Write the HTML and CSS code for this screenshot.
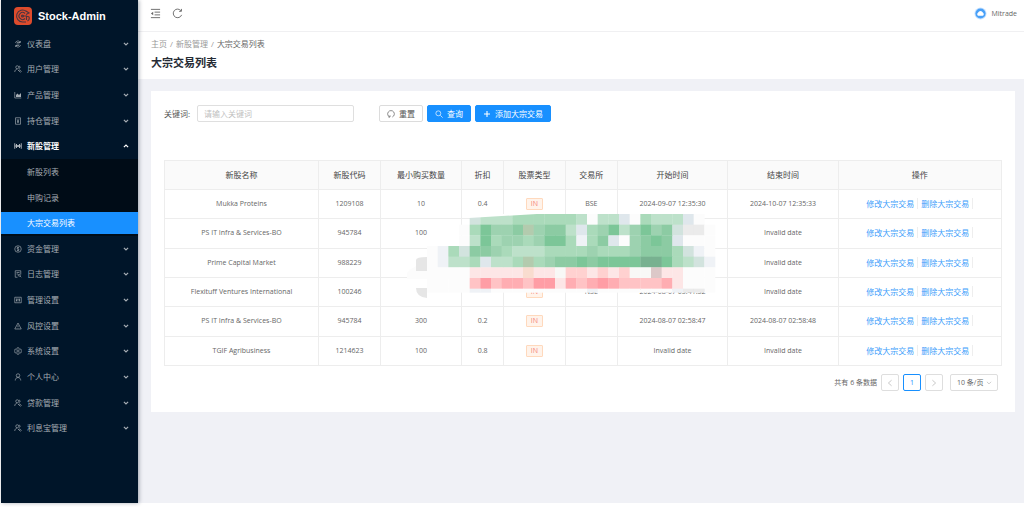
FILE: index.html
```html
<!DOCTYPE html>
<html lang="zh-CN">
<head>
<meta charset="utf-8">
<meta name="viewport" content="width=device-width, initial-scale=1">
<title>大宗交易列表 - Stock-Admin</title>
<link rel="stylesheet" href="styles.css">
</head>
<body>
<svg class="defs" aria-hidden="true">
  <symbol id="down" viewBox="0 0 10 10"><path d="M1.5 3 5 6.5 8.5 3"/></symbol>
  <symbol id="users" viewBox="0 0 16 16"><circle cx="6.5" cy="4.5" r="3"/><path d="M1.5 14c0-3.500 2-5.500 5-5.500M10 2c3 .5 3 4.500 0 5M9 10.500c3-1.500 5.500 1 5.500 3.500M8 10l5 5"/></symbol>
</svg>
<div class="layout">
  <aside class="sidebar">
    <a class="brand" href="#">
      <svg class="brand-logo" viewBox="0 0 18 18" aria-hidden="true"><rect width="18" height="18" rx="4" fill="#dd4b2c"/><g fill="none" stroke="#4a3540" stroke-width="1.100"><path d="M12.500 4.500A6 6 0 1 0 9 15h3M11 6.500a3.500 3.500 0 1 0 0 5M8 9h4.500v4M12 4l3 2-3 1.500M13 9.500c3-.5 3 3 .5 4.500"/><circle cx="8.500" cy="9" r="1"/></g></svg>
      <span>Stock-Admin</span>
    </a>
    <nav>
      <ul class="menu">
        <li><a href="#"><svg class="icon" viewBox="0 0 16 16"><path d="M3 6a5 5 0 0 1 9-2M13 2v3h-3M13 10a5 5 0 0 1-9 2M3 14v-3h3M5 8h6M6 5h6M4 11h6"/></svg>仪表盘<svg class="arrow"><use href="#down"/></svg></a></li>
        <li><a href="#"><svg class="icon"><use href="#users"/></svg>用户管理<svg class="arrow"><use href="#down"/></svg></a></li>
        <li><a href="#"><svg class="icon" viewBox="0 0 16 16"><path d="M1.500 2v12h13"/><path class="solid" d="M4 12V8l3-3 3 3 4-4v8z"/></svg>产品管理<svg class="arrow"><use href="#down"/></svg></a></li>
        <li><a href="#"><svg class="icon" viewBox="0 0 16 16"><path d="M3 1.500h10v13H3zM6 4.500 8 7l2-2.500M8 7v5M6 8h4M6 10h4"/></svg>持仓管理<svg class="arrow"><use href="#down"/></svg></a></li>
        <li class="open"><a href="#"><svg class="icon" viewBox="0 0 16 16"><path d="M1.500 2.500v11M14.500 2.500v11M5 4v8M11 4v8M5 6l6 4M11 6l-6 4M2 8h2M12 8h2"/></svg>新股管理<svg class="arrow up"><use href="#down"/></svg></a></li>
        <li class="submenu">
          <ul>
            <li><a href="#">新股列表</a></li>
            <li><a href="#">申购记录</a></li>
            <li><a class="active" href="#" aria-current="page">大宗交易列表</a></li>
          </ul>
        </li>
        <li><a href="#"><svg class="icon" viewBox="0 0 16 16"><circle cx="8" cy="8" r="6.500"/><path d="M10 6c-.5-2-4-1.500-4 .3C6 8.500 10 7.500 10 9.700c0 2-3.500 2.300-4 .3M8 3.500v9"/></svg>资金管理<svg class="arrow"><use href="#down"/></svg></a></li>
        <li><a href="#"><svg class="icon" viewBox="0 0 16 16"><path d="M7 14.500H2.500v-13h11V9M5 5h6M5 8h3"/><circle cx="10.500" cy="10.500" r="2"/><path d="m12 12 2.500 2.500"/></svg>日志管理<svg class="arrow"><use href="#down"/></svg></a></li>
        <li><a href="#"><svg class="icon" viewBox="0 0 16 16"><path d="M1.500 2.500h13v11h-13zM5 5v6M8 5v6M11 5v6M4 9h2M7 6.500h2M10 8h2"/></svg>管理设置<svg class="arrow"><use href="#down"/></svg></a></li>
        <li><a href="#"><svg class="icon" viewBox="0 0 16 16"><path d="M8 2 1.500 14h13zM8 6.500v3.500M8 11.500v1"/></svg>风控设置<svg class="arrow"><use href="#down"/></svg></a></li>
        <li><a href="#"><svg class="icon" viewBox="0 0 16 16"><path d="m6.500 1.500-.5 2-1.500 1-2-.5L1 6.500 2.500 8 1 9.500 2.500 12l2-.5 1.500 1 .5 2h3l.5-2 1.500-1 2 .5L15 9.500 13.500 8 15 6.500 13.500 4l-2 .5-1.500-1-.5-2z"/><circle cx="8" cy="8" r="2.200"/></svg>系统设置<svg class="arrow"><use href="#down"/></svg></a></li>
        <li><a href="#"><svg class="icon" viewBox="0 0 16 16"><circle cx="8" cy="5" r="3.500"/><path d="M2.500 15c0-4 2.500-6 5.500-6s5.500 2 5.500 6"/></svg>个人中心<svg class="arrow"><use href="#down"/></svg></a></li>
        <li><a href="#"><svg class="icon"><use href="#users"/></svg>贷款管理<svg class="arrow"><use href="#down"/></svg></a></li>
        <li><a href="#"><svg class="icon"><use href="#users"/></svg>利息宝管理<svg class="arrow"><use href="#down"/></svg></a></li>
      </ul>
    </nav>
  </aside>

  <div class="main">
    <header class="topbar">
      <button class="tool" type="button" aria-label="收起菜单"><svg viewBox="0 0 12 12"><path d="M1 1.500h10M5 4.500h6M5 7.500h6M1 10.500h10"/><path class="solid" d="M3.500 4v4L1 6z"/></svg></button>
      <button class="tool" type="button" aria-label="刷新"><svg viewBox="0 0 12 12"><path d="M9.800 3A4.700 4.700 0 1 0 10.500 7.500M10.300 1v2.600H7.700"/></svg></button>
      <a class="account" href="#">
        <svg viewBox="0 0 14 14" aria-hidden="true"><circle cx="7" cy="7" r="6.500" fill="#c9e3ff"/><circle cx="7" cy="7" r="5.500" fill="#48a0f8"/><path d="M4.500 9.500a2 2 0 0 1 0-3.500 2.700 2.700 0 0 1 5 0 2 2 0 0 1 0 3.500z" fill="#fff"/></svg>
        <span>Mitrade</span>
      </a>
    </header>
    <div class="page-head">
      <nav class="crumbs" aria-label="面包屑"><a href="#">主页</a><span>/</span><a href="#">新股管理</a><span>/</span><b>大宗交易列表</b></nav>
      <h1>大宗交易列表</h1>
    </div>

    <main class="card">
      <form class="filters">
        <label for="keyword">关键词:</label>
        <input id="keyword" type="text" placeholder="请输入关键词">
        <button class="btn" type="reset"><svg viewBox="0 0 12 12"><path d="M4 10.500A5 5 0 1 1 8 10.500M2 10.500h2.500V8"/></svg>重置</button>
        <button class="btn primary" type="button"><svg viewBox="0 0 12 12"><circle cx="5" cy="5" r="3.700"/><path d="m8 8 3.500 3.500"/></svg>查询</button>
        <button class="btn primary" type="button"><svg viewBox="0 0 12 12"><path d="M6 1.500v9M1.500 6h9" stroke-width="1.600"/></svg>添加大宗交易</button>
      </form>

      <div class="table-wrap">
        <table>
          <colgroup><col class="c-name"><col class="c-code"><col class="c-min"><col class="c-disc"><col class="c-code"><col class="c-exch"><col class="c-time"><col class="c-time"><col></colgroup>
          <thead><tr><th>新股名称</th><th>新股代码</th><th>最小购买数量</th><th>折扣</th><th>股票类型</th><th>交易所</th><th>开始时间</th><th>结束时间</th><th>操作</th></tr></thead>
          <tbody>
            <tr><td>Mukka Proteins</td><td>1209108</td><td>10</td><td>0.4</td><td><span class="tag">IN</span></td><td>BSE</td><td>2024-09-07 12:35:30</td><td>2024-10-07 12:35:33</td><td class="ops"><a href="#">修改大宗交易</a><a href="#">删除大宗交易</a></td></tr>
            <tr><td>PS IT Infra &amp; Services-BO</td><td>945784</td><td>100</td><td></td><td></td><td></td><td></td><td>Invalid date</td><td class="ops"><a href="#">修改大宗交易</a><a href="#">删除大宗交易</a></td></tr>
            <tr><td>Prime Capital Market</td><td>988229</td><td></td><td></td><td></td><td></td><td></td><td>Invalid date</td><td class="ops"><a href="#">修改大宗交易</a><a href="#">删除大宗交易</a></td></tr>
            <tr><td>Flexituff Ventures International</td><td>100246</td><td></td><td></td><td><span class="tag">IN</span></td><td>NSE</td><td>2024-08-07 03:41:32</td><td>Invalid date</td><td class="ops"><a href="#">修改大宗交易</a><a href="#">删除大宗交易</a></td></tr>
            <tr><td>PS IT Infra &amp; Services-BO</td><td>945784</td><td>300</td><td>0.2</td><td><span class="tag">IN</span></td><td></td><td>2024-08-07 02:58:47</td><td>2024-08-07 02:58:48</td><td class="ops"><a href="#">修改大宗交易</a><a href="#">删除大宗交易</a></td></tr>
            <tr><td>TGIF Agribusiness</td><td>1214623</td><td>100</td><td>0.8</td><td><span class="tag">IN</span></td><td></td><td>Invalid date</td><td>Invalid date</td><td class="ops"><a href="#">修改大宗交易</a><a href="#">删除大宗交易</a></td></tr>
          </tbody>
        </table>
        <svg class="mosaic" id="mosaic" viewBox="0 0 320 96" aria-hidden="true"></svg>
      </div>

      <div class="pager">
        <span>共有 6 条数据</span>
        <button type="button" disabled aria-label="上一页"><svg viewBox="0 0 10 10"><path d="M7 1.500 3 5l4 3.500"/></svg></button>
        <button class="current" type="button" aria-current="page">1</button>
        <button type="button" disabled aria-label="下一页"><svg viewBox="0 0 10 10"><path d="m3 1.500 4 3.500-4 3.500"/></svg></button>
        <span class="size"><select aria-label="每页条数"><option>10 条/页</option><option>20 条/页</option></select><svg><use href="#down"/></svg></span>
      </div>
    </main>
  </div>
</div>
<script src="mosaic.js"></script>
</body>
</html>
```
FILE: mosaic.js
```js
// Pixelated patch over the hidden cells: one letter per tile, a dot is empty.
const colors = {
  A: '#7cc698', B: '#8ccba3', C: '#9dd2b0', D: '#aadaba', E: '#bde1ca',
  F: '#d2e3de', G: '#dfe7ec', H: '#eff2f6', W: '#fcfcfc', K: '#ebebeb',
  M: '#78b190', T: '#b3cbae', P: '#fde6e6', Q: '#ffd1d0', R: '#ffc3c5',
  S: '#ffadb2', X: '#ff9da5', Y: '#f9dccf', Z: '#dcc8c8', N: '#f8f8f6'
};
const rows = [
  '...FEEEDDDDDDEWEEGWDEEEGW..',
  '..WDACCBTCBBEGDCAECACBFKKW.',
  '..WEADCCDCAADHDBGWCBABGWWW.',
  'WHDFBBCDEEEDDDDCDDDCBBBDFHW',
  'WHEEDGEEDTDCBBABAAAAMMADEFH',
  'WWWWPPPPPYPPNQQPQPQNNZPPWWW',
  'WWWWRXRSSRXXPSRSXSRRRRSPWWW',
  'WWWWHHWWWWWWWWWHWWWWWWWHKKW'
];
const svg = document.getElementById('mosaic');
const tile = (tag, attrs) => {
  const el = document.createElementNS('http://www.w3.org/2000/svg', tag);
  for (const key in attrs) el.setAttribute(key, attrs[key]);
  svg.appendChild(el);
};
const step = 32 / 3;
tile('path', { d: 'M0 59Q8 49 25 49H60V65H0Z M24 32H50V60H24Z', fill: '#fcfcfc' });
tile('path', { d: 'M9 57V46Q9 43 20 43V57Z M9 74H20V84Q9 83 9 74Z', fill: '#e6e6e6' });
rows.forEach((row, y) => {
  const shift = y < 3 ? 1 : 0;
  [...row].forEach((letter, x) => {
    if (letter === '.') return;
    tile('rect', {
      x: 20 + (x + shift) * step, y: y * step,
      width: step + 0.3, height: y === 7 ? 4 : step + 0.3,
      fill: colors[letter]
    });
  });
});
// slanted upper edge
tile('path', { d: 'M62 0H130L62 4Z', fill: '#fff' });
```
FILE: styles.css
```css
* { box-sizing: border-box; }
body {
  margin: 0;
  padding: 0 0 4px 1px;
  background: #fff;
  color: #666;
  font: 8px/12px "Open Sans", "Noto Sans CJK SC", sans-serif;
}
a { color: inherit; text-decoration: none; }
ul { margin: 0; padding: 0; list-style: none; }
button, input, select { font: inherit; color: inherit; }
svg { fill: none; stroke: currentColor; flex: none; }
.solid { fill: currentColor; stroke: none; }
.defs { position: absolute; width: 0; height: 0; }

.layout { display: flex; min-height: calc(100vh - 4px); background: #f0f1f6; }
.sidebar {
  position: relative;
  z-index: 1;
  flex: none;
  width: 137px;
  background: #001529;
  color: #a6adb4;
  box-shadow: 1px 0 4px rgba(0, 21, 41, .35);
}
.brand {
  display: flex;
  align-items: center;
  gap: 6px;
  height: 31px;
  padding-left: 13px;
  color: #fff;
  font: bold 11px/16px "Liberation Sans", Arial, sans-serif;
}
.brand-logo { width: 18px; height: 18px; stroke: none; }
.menu { display: grid; grid-auto-rows: 1fr; height: 410px; }
.menu a { display: flex; align-items: center; height: 100%; padding: 0 9px 0 13px; }
.icon { width: 8px; height: 8px; margin-right: 5px; stroke-width: 1.3; }
.arrow { width: 6px; height: 6px; margin-left: auto; stroke-width: 2; }
.up { transform: rotate(180deg); }
.open { color: #fff; font-weight: bold; }
.submenu { grid-row: span 3; background: #000c17; }
.submenu ul { display: grid; grid-auto-rows: 1fr; height: 100%; }
.submenu li { padding: 2px 0; }
.submenu a { padding-left: 26px; }
.submenu .active { background: #1890ff; color: #fff; }

.main { flex: 1; min-width: 0; }
.topbar {
  display: flex;
  align-items: center;
  gap: 11px;
  height: 32px;
  padding: 0 7px 4px 12px;
  background: #fff;
  border-bottom: 1px solid #f0f0f2;
}
.tool { width: 11px; height: 11px; padding: 0; border: 0; background: none; color: #666; }
.tool svg { display: block; width: 11px; height: 11px; }
.account { display: flex; align-items: center; gap: 4px; margin-left: auto; font-size: 7px; }
.account svg { width: 13px; height: 13px; stroke: none; }
.page-head { padding: 6px 13px 8px; background: #fff; }
.crumbs { display: flex; gap: 3px; color: #999; }
.crumbs b { color: #666; font-weight: normal; }
h1 { margin: 5px 0 0; color: #262b35; font-size: 11px; line-height: 16px; }

.card { margin: 12px 9px 0 13px; padding: 14px 13px 21px; background: #fff; }
.filters { display: flex; align-items: center; gap: 4px; margin-bottom: 38px; color: #555; }
.filters label { width: 29px; }
.filters input {
  width: 157px;
  height: 17px;
  margin-right: 21px;
  padding: 0 6px;
  border: 1px solid #dfdfdf;
  border-radius: 2px;
}
.filters input::placeholder { color: #bfbfbf; }
.btn {
  display: flex;
  align-items: center;
  gap: 4px;
  height: 17px;
  padding: 0 7px;
  border: 1px solid #dcdcdc;
  border-radius: 2px;
  background: #fff;
  white-space: nowrap;
}
.btn svg { width: 8px; height: 8px; }
.primary { border-color: #1890ff; background: #1890ff; color: #fff; }

.table-wrap { position: relative; }
table { width: 100%; height: 206px; table-layout: fixed; border-collapse: collapse; font-size: 7px; }
th, td { padding: 0; border: 1px solid #ededed; text-align: center; white-space: nowrap; }
th { height: 29px; background: #fafafa; color: #444; font-size: 8px; font-weight: normal; }
.c-name { width: 18.4%; }
.c-code { width: 7.4%; }
.c-min { width: 9.7%; }
.c-disc { width: 5%; }
.c-exch { width: 6.2%; }
.c-time { width: 13.2%; }
.tag {
  display: inline-block;
  padding: 0 4px;
  border: 1px solid #ffd9bd;
  border-radius: 1px;
  background: #fff3ea;
  color: #f58279;
  line-height: 10px;
}
.ops { color: #3c9dfb; font-size: 8px; }
.ops a { padding-right: 3px; border-right: 1px solid #eee; }
.ops a + a { margin-left: 3px; }
.mosaic { position: absolute; left: 29%; top: 54px; width: 320px; height: 96px; stroke: none; }

.pager { display: flex; align-items: center; justify-content: flex-end; gap: 4px; margin-top: 8px; padding-right: 4px; font-size: 7px; }
.pager button {
  display: grid;
  place-items: center;
  width: 18px;
  height: 17px;
  padding: 0;
  border: 1px solid #dedede;
  border-radius: 2px;
  background: #fff;
}
.pager button:disabled { color: #bbb; }
.pager button svg { width: 8px; height: 8px; }
.pager .current { border-color: #1890ff; color: #1890ff; }
.size { position: relative; margin-left: 3px; }
.size select {
  display: block;
  width: 48px;
  height: 17px;
  padding: 0 6px;
  border: 1px solid #dedede;
  border-radius: 2px;
  background: #fff;
  appearance: none;
}
.size svg { position: absolute; right: 6px; top: 6px; width: 6px; height: 6px; color: #aaa; pointer-events: none; }
```
